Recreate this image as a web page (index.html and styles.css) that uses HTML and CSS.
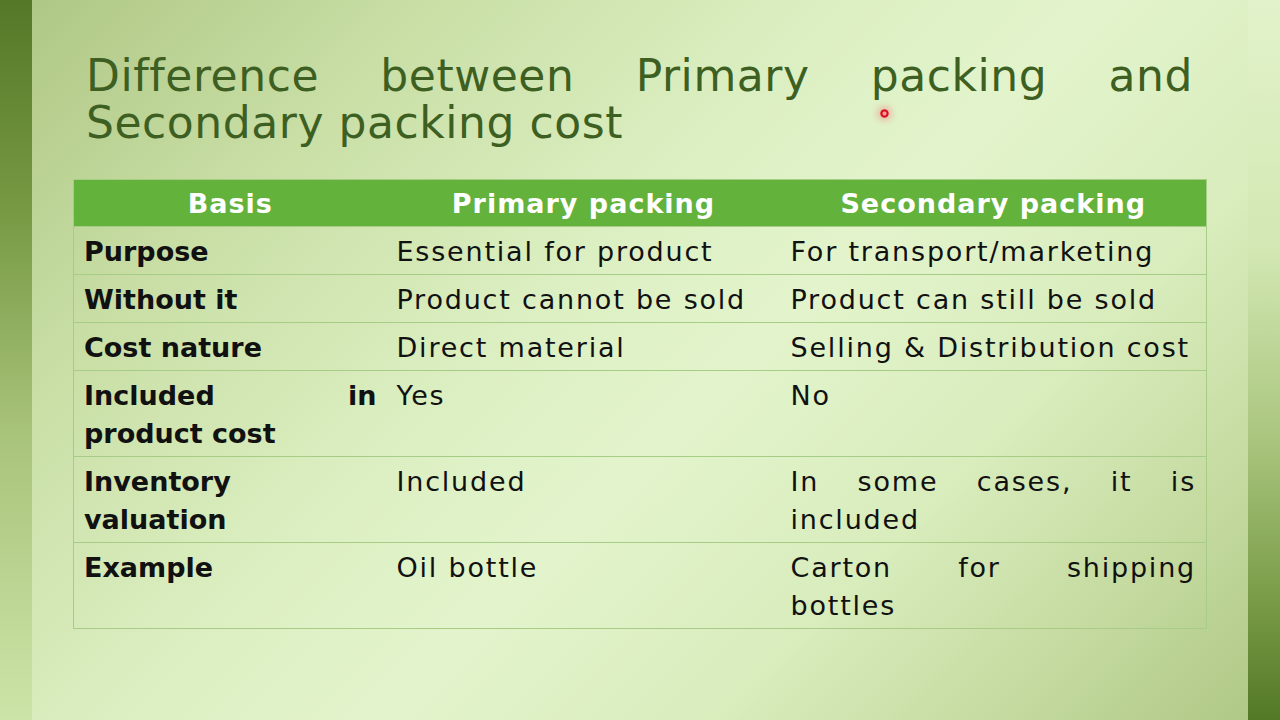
FILE: index.html
```html
<!DOCTYPE html>
<html lang="en">
<head>
<meta charset="utf-8">
<title>Difference between Primary packing and Secondary packing cost</title>
<link rel="stylesheet" href="styles.css">
</head>
<body>
<div class="slide">
  <div class="strip strip-left"></div>
  <main class="content">
    <h1 class="title">Difference between Primary packing and Secondary packing cost</h1>
    <table class="compare">
      <thead>
        <tr>
          <th class="c1">Basis</th>
          <th class="c2">Primary packing</th>
          <th class="c3">Secondary packing</th>
        </tr>
      </thead>
      <tbody>
        <tr>
          <td class="basis">Purpose</td>
          <td>Essential for product</td>
          <td>For transport/marketing</td>
        </tr>
        <tr>
          <td class="basis">Without it</td>
          <td>Product cannot be sold</td>
          <td>Product can still be sold</td>
        </tr>
        <tr>
          <td class="basis">Cost nature</td>
          <td>Direct material</td>
          <td>Selling &amp; Distribution cost</td>
        </tr>
        <tr>
          <td class="basis">Included in product cost</td>
          <td>Yes</td>
          <td>No</td>
        </tr>
        <tr>
          <td class="basis">Inventory valuation</td>
          <td>Included</td>
          <td>In some cases, it is included</td>
        </tr>
        <tr>
          <td class="basis">Example</td>
          <td>Oil bottle</td>
          <td>Carton for shipping bottles</td>
        </tr>
      </tbody>
    </table>
  </main>
  <div class="strip strip-right"></div>
  <span class="pointer"></span>
</div>
</body>
</html>
```
FILE: styles.css
```css
* { box-sizing: border-box; }
html, body { margin: 0; padding: 0; }
body { width: 1280px; height: 720px; overflow: hidden; }

.slide {
  position: relative;
  display: flex;
  width: 1280px;
  height: 720px;
  background:
    linear-gradient(135deg, #adc583 0%, #c9dfa6 22%, #dcefc2 42%, #e3f4cc 55%, #d8ecbc 72%, #c4da9f 86%, #adc584 100%);
  font-family: "DejaVu Sans", "Liberation Sans", sans-serif;
}

.strip { width: 32px; flex: none; }
.strip-left {
  background: linear-gradient(180deg, #547827 0%, #789a45 30%, #a8c37a 60%, #cde4a8 100%);
}
.strip-right {
  background: linear-gradient(180deg, #e2f3cb 0%, #d2e7b2 35%, #a8c47c 62%, #7c9e4a 82%, #537826 100%);
}

.content {
  flex: 1;
  padding: 52px 41px 0 41px;
}

.title {
  margin: 0 14px 33px 13px;
  font-weight: normal;
  font-size: 44px;
  line-height: 47px;
  color: #3e5f22;
  text-align: justify;
  letter-spacing: 0.55px;
}

.compare {
  width: 100%;
  border-collapse: collapse;
  border: 1px solid #a6cc86;
  font-size: 27px;
  line-height: 38px;
  color: #111;
}

.compare th {
  background: #63b23b;
  color: #fff;
  font-weight: bold;
  height: 47px;
  padding: 1px 10px 0 10px;
  text-align: center;
  letter-spacing: 1px;
}
.compare .c1 { width: 313px; }
.compare .c2 { width: 394px; }

.compare td {
  padding: 6px 10px 3px 10px;
  vertical-align: top;
  text-align: justify;
  border-top: 1px solid #a6cc86;
  letter-spacing: 1.8px;
}

.compare .basis { font-weight: bold; letter-spacing: 0; }

.pointer {
  position: absolute;
  left: 880px;
  top: 109px;
  width: 9px;
  height: 9px;
  border-radius: 50%;
  background: radial-gradient(circle, #ff9a9a 0 1.5px, #d4101e 2.5px 3.5px, #ec6a72 4.5px);
  box-shadow: 0 0 6px 3px rgba(240, 110, 120, 0.4);
}
```
